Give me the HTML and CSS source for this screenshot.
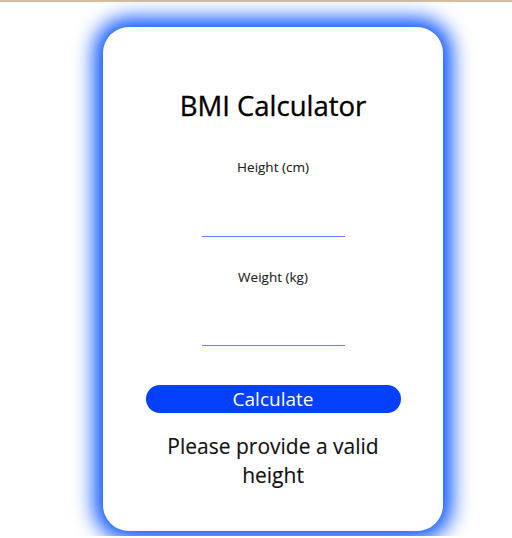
FILE: index.html
```html
<!DOCTYPE html>
<html>
<head>
<meta charset="utf-8">
<link rel="stylesheet" href="styles.css">
</head>
<body>
<div class="page">
  <div class="card">
    <h1 class="title">BMI Calculator</h1>
    <label class="label">Height (cm)</label>
    <input class="field" type="text">
    <label class="label label-second">Weight (kg)</label>
    <input class="field field-second" type="text">
    <button class="btn">Calculate</button>
    <p class="message">Please provide a valid height</p>
  </div>
</div>
</body>
</html>
```

FILE: styles.css
```css
html, body {
  margin: 0;
  padding: 0;
  background: #fff;
  font-family: "Open Sans", "Noto Sans", sans-serif;
}
.page {
  border-top: 2px solid #d6bfa0;
  padding: 25px 0 0 103px;
  height: 536px;
  box-sizing: border-box;
}
.card {
  width: 340px;
  height: 504px;
  box-sizing: border-box;
  background: #fff;
  border-radius: 26px;
  box-shadow: 0 0 20px 9px #0a55ff;
  display: flex;
  flex-direction: column;
  align-items: center;
  padding-top: 60px;
}
.title {
  margin: 0;
  font-size: 27.5px;
  line-height: 38px;
  font-weight: 400;
  -webkit-text-stroke: 0.35px #000;
  color: #000;
}
.label {
  margin-top: 33px;
  font-size: 13.5px;
  line-height: 18px;
  color: #222;
  -webkit-text-stroke: 0.1px #222;
}
.label-second {
  margin-top: 31px;
}
.field {
  margin-top: 21px;
  width: 143px;
  height: 40px;
  box-sizing: border-box;
  border: none;
  border-bottom: 1px solid #6f7dff;
  outline: none;
  background: transparent;
  padding: 0;
}
.field-second {
  margin-top: 20px;
}
.btn {
  margin-top: 39px;
  width: 255px;
  height: 28px;
  border: none;
  border-radius: 14px;
  background: #0540ff;
  color: #fff;
  font-family: "Open Sans", "Noto Sans", sans-serif;
  font-size: 19px;
  line-height: 28px;
  padding: 0;
}
.message {
  margin: 19px 0 0;
  width: 240px;
  text-align: center;
  font-size: 21px;
  line-height: 29px;
  color: #111;
  -webkit-text-stroke: 0.15px #111;
}
```
